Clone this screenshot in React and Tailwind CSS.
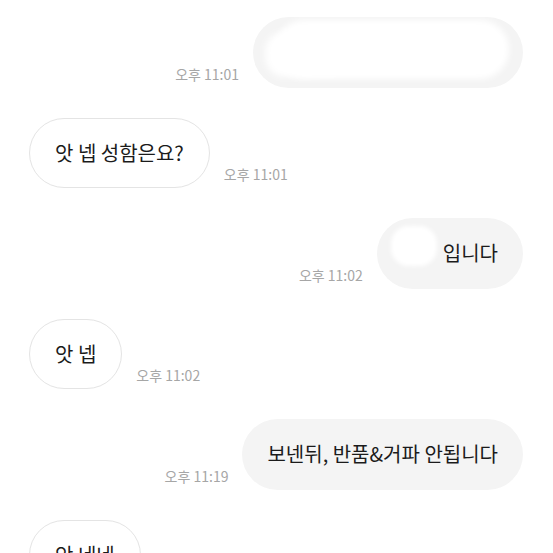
import React from "react";

const font = { fontFamily: '"Noto Sans CJK KR", "Noto Sans", sans-serif' };

function Time({ t }) {
  return (
    <span className="text-[14px] leading-[20px] text-[#a6a6a6] mb-[4px] whitespace-nowrap">
      {t}
    </span>
  );
}

function Left({ text, time }) {
  return (
    <div className="flex items-end gap-[14px] pl-[29px]">
      <div className="h-[70.5px] flex items-center px-[25px] rounded-full border border-[#e4e4e4] bg-white text-[20px] text-[#1b1b1b] whitespace-nowrap">
        {text}
      </div>
      {time && <Time t={time} />}
    </div>
  );
}

function Right({ children, time, extraLeft }) {
  return (
    <div className="flex items-end justify-end gap-[14px] pr-[30px]">
      <Time t={time} />
      <div className="relative h-[70.5px] flex items-center pr-[25px] rounded-full bg-[#f4f4f4] text-[20px] text-[#1b1b1b] whitespace-nowrap" style={{ paddingLeft: extraLeft }}>
        {children}
      </div>
    </div>
  );
}

export default function App() {
  return (
    <div className="w-[553px] h-[553px] overflow-hidden bg-white" style={font}>
      <div className="flex flex-col gap-[30px] pt-[17px]">
        <div className="flex items-end justify-end gap-[14px] pr-[30px]">
          <Time t="오후 11:01" />
          <div className="relative h-[70.5px] w-[270px] rounded-full bg-[#f4f4f4] overflow-hidden">
            <div className="absolute left-[22px] right-[14px] top-[3px] bottom-[9px] bg-white rounded-[30px] blur-[3px]" />
            <div className="absolute left-[12px] w-[150px] top-[12px] bottom-[14px] bg-white rounded-[20px] blur-[3px] rotate-[-3deg]" />
          </div>
        </div>
        <Left text="앗 넵 성함은요?" time="오후 11:01" />
        <Right time="오후 11:02" extraLeft="66px">
          <div className="absolute left-[14px] top-[8px] w-[46px] h-[40px] bg-white rounded-[18px] blur-[2px]" />
          <span className="relative">입니다</span>
        </Right>
        <Left text="앗 넵" time="오후 11:02" />
        <Right time="오후 11:19" extraLeft="25px">
          보넨뒤, 반품&amp;거파 안됩니다
        </Right>
        <Left text="앗 네네" />
      </div>
    </div>
  );
}
